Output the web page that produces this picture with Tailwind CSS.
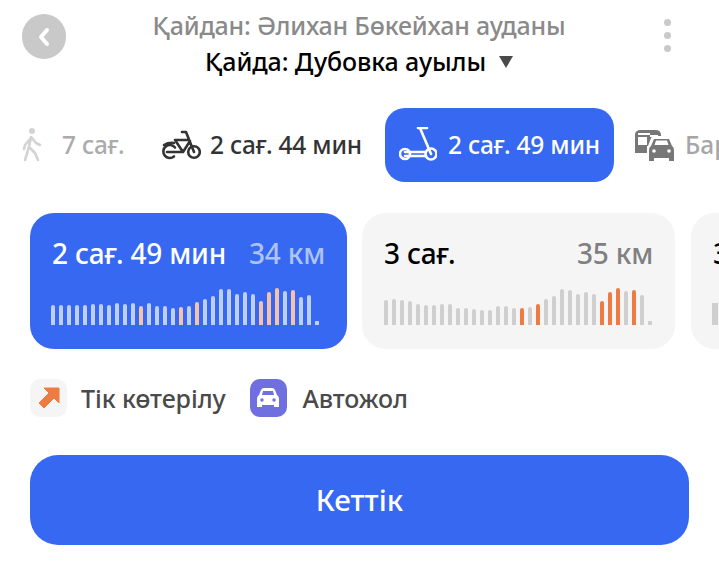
<!DOCTYPE html>
<html lang="kk">
  <head>
    <meta charset="UTF-8" />
    <meta name="viewport" content="width=device-width, initial-scale=1.0" />
    <title>Маршрут</title>
    <script src="https://cdn.jsdelivr.net/npm/@tailwindcss/browser@4"></script>
  </head>
  <body class="bg-white">
    <div class="w-[719px] h-[562px] overflow-hidden font-['Noto_Sans',sans-serif]">
      <!-- Header -->
      <div class="flex items-start h-[108px] pl-[22px] pr-[48px] pt-[14px]">
        <button class="w-[44px] h-[45px] rounded-full bg-[#c9c9c9] flex items-center justify-center shrink-0">
          <svg width="14" height="20" viewBox="0 0 14 20" fill="none" stroke="#fff" stroke-width="4" stroke-linecap="round" stroke-linejoin="round"><path d="M10 3 L4 10 L10 17" /></svg>
        </button>
        <div class="flex-1 text-center -mt-[3px] mr-[12px]">
          <div class="text-[25px] leading-[28px] text-[#8a8a8a] font-medium tracking-[-0.2px] whitespace-nowrap">Қайдан: Әлихан Бөкейхан ауданы</div>
          <div class="mt-[8px] flex items-center justify-center gap-[13px] text-[25px] leading-[28px] text-black font-medium tracking-[-0.1px]">
            <span>Қайда: Дубовка ауылы</span>
            <span class="w-0 h-0 border-x-[7px] border-x-transparent border-t-[12px] border-t-[#4a4a4a] mt-[2px]"></span>
          </div>
        </div>
        <div class="flex flex-col gap-[6px] pt-[5px] shrink-0">
          <span class="w-[7px] h-[7px] rounded-full bg-[#c9c9c9]"></span>
          <span class="w-[7px] h-[7px] rounded-full bg-[#c9c9c9]"></span>
          <span class="w-[7px] h-[7px] rounded-full bg-[#c9c9c9]"></span>
        </div>
      </div>

      <!-- Transport modes -->
      <div class="flex items-center h-[74px] pl-[22px] text-[24.5px] font-medium whitespace-nowrap">
        <svg class="opacity-25 shrink-0" width="20" height="36" viewBox="0 0 20 36" fill="none" stroke="#555" stroke-width="2.6" stroke-linecap="round" stroke-linejoin="round">
          <circle cx="10" cy="4" r="3" fill="#555" stroke="none" />
          <path d="M9 10 L7 20 L3 33 M7 20 L13 26 L16 33 M9 11 L3 18 L2 22 M10 11 L14 16 L18 18" />
        </svg>
        <span class="ml-[20px] w-[63px] shrink-0 text-[#ababab] tracking-[-0.2px]">7 сағ.</span>
        <svg class="ml-[36px] shrink-0" width="40" height="30" viewBox="0 0 40 30" fill="none" stroke="#333" stroke-width="2.6" stroke-linecap="round" stroke-linejoin="round">
          <circle cx="33" cy="22" r="5.8" />
          <path d="M14 17.5 A6.5 6.5 0 1 0 13 26.5" />
          <path d="M6 22 H22 L29 11 M21 2 H25 L33 22 M14 10 H27 M14 10 L22 22" />
          <path d="M3 15 Q7 12.5 13 13" />
        </svg>
        <span class="ml-[9px] w-[152px] shrink-0 text-[#333] tracking-[-0.2px]">2 сағ. 44 мин</span>
        <div class="ml-[23px] w-[229px] h-[74px] rounded-[20px] bg-[#3668f2] flex items-center pl-[14px] text-white shrink-0">
          <svg class="shrink-0" width="38" height="36" viewBox="0 0 38 36" fill="none" stroke="#fff" stroke-width="2.6" stroke-linecap="round" stroke-linejoin="round">
            <circle cx="6" cy="27" r="5" />
            <circle cx="32" cy="27" r="5.5" />
            <path d="M19 1 L28 1 M21 1 L32 27 M6 25 L27 25 M6 29 L27 29" />
          </svg>
          <span class="ml-[11px] tracking-[-0.2px]">2 сағ. 49 мин</span>
        </div>
        <svg class="ml-[21px] shrink-0" width="40" height="33" viewBox="0 0 40 33">
          <path d="M0 6 Q0 1 6 1 H20 Q26 1 26 6 V24 H0 Z" fill="#777" />
          <path d="M3 8 H12 V16 H3 Z M15 4 H3 V6 H23 V8 H15 Z" fill="#fff" />
          <path d="M13 17 L16 9 Q17 7 20 7 H33 Q36 7 37 9 L40 17 V33 H12 V17 Z" fill="#fff" />
          <path d="M16 17 L19 10 H34 L37 17 Q39 18 39 21 V32 H34 V29 H19 V32 H14 V21 Q14 18 16 17 Z M19.5 16 H33.5 L32 11.5 H21 Z" fill="#777" fill-rule="evenodd" />
          <circle cx="19" cy="22" r="1.8" fill="#fff" />
          <circle cx="34" cy="22" r="1.8" fill="#fff" />
        </svg>
        <span class="ml-[10px] text-[#a6a6a6]">Бар</span>
      </div>

      <!-- Route cards -->
      <div class="flex gap-[15px] pl-[30px] mt-[31px]">
        <div class="relative w-[317px] h-[136px] shrink-0 rounded-[24px] bg-[#3668f2] px-[22px] overflow-hidden">
          <div class="flex justify-between items-baseline pt-[23px] text-[28px] leading-[34px] font-medium tracking-[-0.2px]">
            <span class="text-white">2 сағ. 49 мин</span>
            <span class="text-[#aec3f8]">34 км</span>
          </div>
          <div id="bars1" class="absolute left-[21px] bottom-[24px] flex items-end gap-[4px]"></div>
        </div>
        <div class="relative w-[313px] h-[136px] shrink-0 rounded-[24px] bg-[#f5f5f5] px-[22px] overflow-hidden">
          <div class="flex justify-between items-baseline pt-[23px] text-[28px] leading-[34px] font-medium tracking-[-0.2px]">
            <span class="text-black">3 сағ.</span>
            <span class="text-[#808080]">35 км</span>
          </div>
          <div id="bars2" class="absolute left-[22px] bottom-[24px] flex items-end gap-[4px]"></div>
        </div>
        <div class="relative w-[60px] h-[136px] shrink-0 ml-[1px] rounded-[24px] bg-[#f5f5f5] pl-[22px] pt-[23px] text-[28px] leading-[34px] font-medium text-black">
          3
          <span class="absolute left-[21px] bottom-[24px] w-[6px] h-[22px] bg-[#cfcfcf]"></span>
        </div>
      </div>

      <!-- Tags -->
      <div class="flex items-center pl-[30px] mt-[30px] text-[25px] leading-[38px] text-[#4a4a4a] font-medium tracking-[-0.1px]">
        <span class="w-[37px] h-[38px] rounded-[10px] bg-[#f5f5f5] flex items-center justify-center">
          <svg width="22" height="22" viewBox="0 0 22 22"><path d="M6 1 L21 1 L21 16 L16 11 L6 21 L1 16 L11 6 Z" fill="#ee7c42" stroke="#ee7c42" stroke-linejoin="round" /></svg>
        </span>
        <span class="ml-[14px]">Тік көтерілу</span>
        <span class="ml-[24px] w-[37px] h-[38px] rounded-[10px] bg-[#6f6fe0] flex items-center justify-center">
          <svg width="24" height="22" viewBox="0 0 24 22"><path d="M3 8 L5 3 Q6 1 8 1 H16 Q18 1 19 3 L21 8 Q23 9 23 12 V20 H18 V18 H6 V20 H1 V12 Q1 9 3 8 Z M6 8 H18 L17 4 H7 Z" fill="#fff" fill-rule="evenodd" /><circle cx="6" cy="13" r="1.7" fill="#6f6fe0" /><circle cx="18" cy="13" r="1.7" fill="#6f6fe0" /></svg>
        </span>
        <span class="ml-[16px]">Автожол</span>
      </div>

      <!-- Go button -->
      <div class="px-[30px] mt-[38px]">
        <button class="w-[659px] h-[90px] rounded-[28px] bg-[#3668f2] text-white text-[29.5px] font-medium">Кеттік</button>
      </div>
    </div>

    <script>
      // [height, highlighted]
      const route1 = [
        [20], [20], [20], [20], [20], [21], [21], [20], [22], [21], [22], [19, 1],
        [22], [19], [19], [17], [18, 1], [19], [23, 1], [26], [29], [36], [36], [31],
        [33], [31], [24, 1], [33, 1], [37, 1], [34], [35, 1], [28], [30],
      ];
      const route2 = [
        [25], [26], [25], [24], [21], [20], [20], [21], [21], [17], [17], [16],
        [15], [15], [19], [19], [17], [17, 1], [18], [21, 1], [26], [29], [36], [35],
        [31], [33], [31], [24, 1], [33, 1], [37, 1], [34], [35, 1], [30],
      ];

      function drawBars(id, data, normal, hot) {
        const box = document.getElementById(id);
        data.forEach(([h, isHot]) => {
          const bar = document.createElement("span");
          bar.className = "w-[4px] rounded-t-[2px] " + (isHot ? hot : normal);
          bar.style.height = h + "px";
          box.appendChild(bar);
        });
        const dot = document.createElement("span");
        dot.className = "w-[4px] h-[4px] " + normal;
        box.appendChild(dot);
      }

      drawBars("bars1", route1, "bg-[#bcd0fb]", "bg-[#f6c3a8]");
      drawBars("bars2", route2, "bg-[#cfcfcf]", "bg-[#ee7c42]");
    </script>
  </body>
</html>
